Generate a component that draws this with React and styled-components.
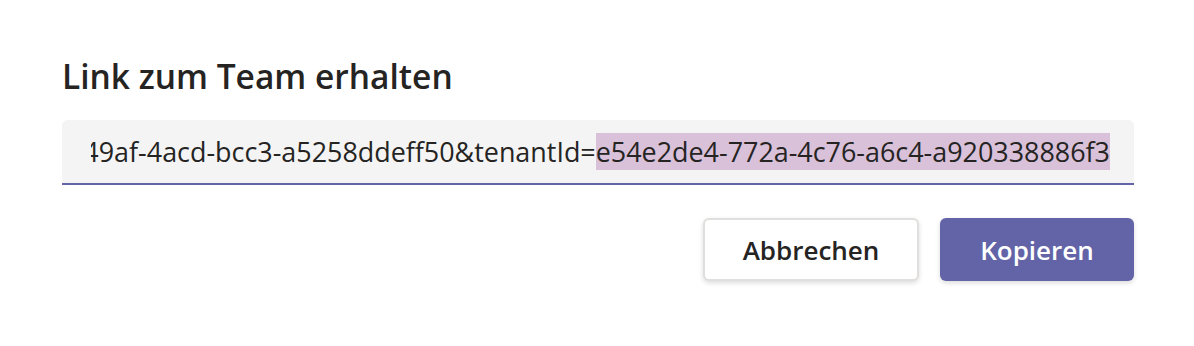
import React from "react";
import styled, { createGlobalStyle } from "styled-components";

const GlobalStyle = createGlobalStyle`
  html, body {
    margin: 0;
    padding: 0;
    background: #fff;
  }
  body {
    font-family: "Open Sans", "Noto Sans", sans-serif;
    color: #252423;
  }
`;

const Dialog = styled.div`
  width: 1194px;
  height: 346px;
  box-sizing: border-box;
  padding: 56px 60px 0 62px;
  background: #fff;
  display: flex;
  flex-direction: column;
`;

const Title = styled.h1`
  margin: 0;
  font-family: "Open Sans", sans-serif;
  font-weight: 600;
  font-size: 33.5px;
  line-height: 40px;
  color: #252423;
`;

const Field = styled.div`
  margin-top: 24px;
  height: 63px;
  background: #f4f4f4;
  border-bottom: 2px solid #6264a7;
  border-radius: 6px 6px 0 0;
  display: flex;
  align-items: center;
  padding: 0 24px 0 29px;
`;

const Clip = styled.div`
  flex: 1;
  min-width: 0;
  overflow: hidden;
  display: flex;
  justify-content: flex-end;
`;

const Value = styled.div`
  flex-shrink: 0;
  white-space: nowrap;
  font-family: "Open Sans", sans-serif;
  font-size: 26.9px;
  line-height: 37px;
  color: #252423;
`;

const Selected = styled.span`
  background: #d9c1d9;
`;

const Actions = styled.div`
  margin-top: 33px;
  display: flex;
  justify-content: flex-end;
  gap: 21px;
`;

const Button = styled.button`
  height: 63px;
  width: ${(p) => p.$width}px;
  box-sizing: border-box;
  border-radius: 6px;
  font-family: "Open Sans", sans-serif;
  font-weight: 600;
  font-size: 26px;
  cursor: pointer;
  border: ${(p) => (p.$primary ? "none" : "2px solid #e1dfdd")};
  background: ${(p) => (p.$primary ? "#6264a7" : "#fff")};
  color: ${(p) => (p.$primary ? "#fff" : "#252423")};
  box-shadow: 0 2px 5px rgba(0, 0, 0, 0.14);
`;

export default function App() {
  return (
    <>
      <GlobalStyle />
      <Dialog>
        <Title>Link zum Team erhalten</Title>
        <Field>
          <Clip>
            <Value>
              https://teams.microsoft.com/l/team/19%3a0b4ef7a2%40thread.tacv2/conversations?groupId=5c8d1e24-49af-4acd-bcc3-a5258ddeff50&amp;tenantId=
              <Selected>e54e2de4-772a-4c76-a6c4-a920338886f3</Selected>
            </Value>
          </Clip>
        </Field>
        <Actions>
          <Button $width={216}>Abbrechen</Button>
          <Button $primary $width={194}>Kopieren</Button>
        </Actions>
      </Dialog>
    </>
  );
}
